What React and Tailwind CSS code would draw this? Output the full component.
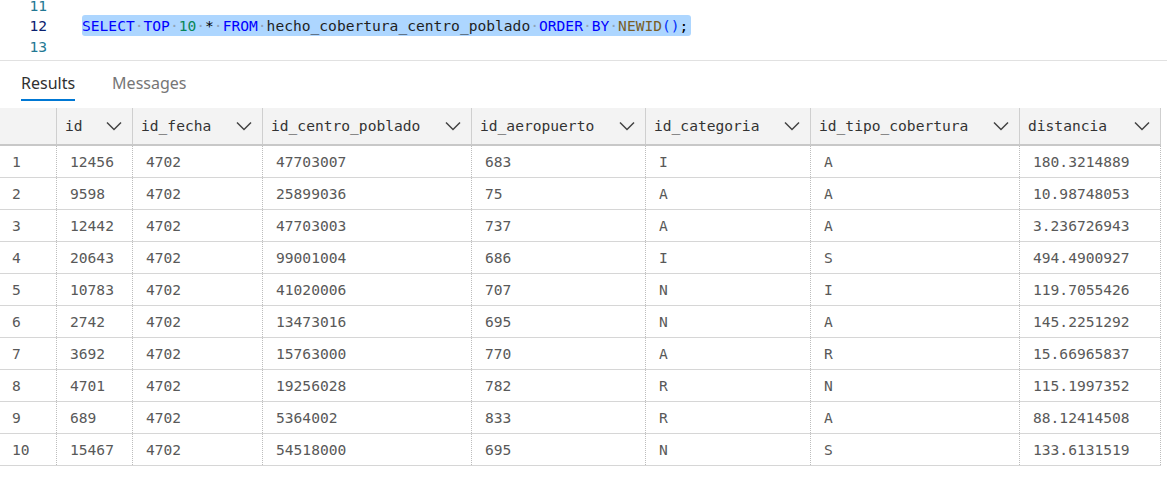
import React from "react";

const mono = { fontFamily: '"DejaVu Sans Mono", "Liberation Mono", monospace' };

const columns = [
  { key: "id", w: "w-[76px]" },
  { key: "id_fecha", w: "w-[130px]" },
  { key: "id_centro_poblado", w: "w-[209px]" },
  { key: "id_aeropuerto", w: "w-[174px]" },
  { key: "id_categoria", w: "w-[165px]" },
  { key: "id_tipo_cobertura", w: "w-[209px]" },
  { key: "distancia", w: "w-[141px]" },
];

const rows = [
  ["12456", "4702", "47703007", "683", "I", "A", "180.3214889"],
  ["9598", "4702", "25899036", "75", "A", "A", "10.98748053"],
  ["12442", "4702", "47703003", "737", "A", "A", "3.236726943"],
  ["20643", "4702", "99001004", "686", "I", "S", "494.4900927"],
  ["10783", "4702", "41020006", "707", "N", "I", "119.7055426"],
  ["2742", "4702", "13473016", "695", "N", "A", "145.2251292"],
  ["3692", "4702", "15763000", "770", "A", "R", "15.66965837"],
  ["4701", "4702", "19256028", "782", "R", "N", "115.1997352"],
  ["689", "4702", "5364002", "833", "R", "A", "88.12414508"],
  ["15467", "4702", "54518000", "695", "N", "S", "133.6131519"],
];

function Chevron() {
  return (
    <svg width="16" height="10" viewBox="0 0 16 10" fill="none">
      <polyline points="1,1.5 8,8.5 15,1.5" stroke="#424242" strokeWidth="1.5" />
    </svg>
  );
}

function Dot() {
  return <span className="text-[#8fa3b8]">·</span>;
}

function Editor() {
  return (
    <div className="h-[61px] overflow-hidden border-b border-[#e1e1e1]" style={mono}>
      <div className="mt-[-4px] flex flex-col text-[14.6px]">
        <div className="flex h-[19px] items-end">
          <span className="w-[47px] text-right leading-[19px] text-[#237893]">11</span>
        </div>
        <div className="flex h-[21px] items-center">
          <span className="w-[47px] text-right text-[#0b216f]">12</span>
          <span className="ml-[35px] flex h-[21px] items-center whitespace-pre rounded-[3px] bg-[#add6ff] pr-[3px]">
            <span className="text-[#0000ff]">SELECT</span><Dot />
            <span className="text-[#0000ff]">TOP</span><Dot />
            <span className="text-[#098658]">10</span><Dot />
            <span className="text-[#000000]">*</span><Dot />
            <span className="text-[#0000ff]">FROM</span><Dot />
            <span className="text-[#1f1f1f]">hecho_cobertura_centro_poblado</span><Dot />
            <span className="text-[#0000ff]">ORDER</span><Dot />
            <span className="text-[#0000ff]">BY</span><Dot />
            <span className="text-[#795e26]">NEWID</span>
            <span className="text-[#0431fa]">()</span>
            <span className="text-[#000000]">;</span>
          </span>
        </div>
        <div className="flex h-[21px] items-center">
          <span className="w-[47px] text-right text-[#237893]">13</span>
        </div>
      </div>
    </div>
  );
}

function Tabs() {
  return (
    <div
      className="flex h-[40px] items-stretch gap-[37px] pl-[21px] text-[16px]"
      style={{ fontFamily: '"Segoe UI", "Noto Sans", sans-serif' }}
    >
      <div className="flex items-center border-b-2 border-[#0078d4] pt-[5px] text-[#303030]">
        Results
      </div>
      <div className="flex items-center pt-[3px] text-[#767676]">Messages</div>
    </div>
  );
}

function Table() {
  return (
    <div className="mt-[7px] w-[1161px] text-[14.6px]" style={mono}>
      {/* header */}
      <div className="flex h-[38px] border-b-2 border-[#c8c8c8] bg-[#f3f3f3] text-[#333333]">
        <div className="w-[57px] shrink-0 border-r border-[#cfcfcf]"></div>
        {columns.map((c) => (
          <div
            key={c.key}
            className={`${c.w} flex shrink-0 items-center justify-between border-r border-[#cfcfcf] pl-[8px] pr-[10px]`}
          >
            <span>{c.key}</span>
            <Chevron />
          </div>
        ))}
      </div>

      {/* body */}
      {rows.map((r, i) => (
        <div key={i} className="flex h-[32px] border-b border-[#d6d6d6] text-[#595959]">
          <div className="flex w-[57px] shrink-0 items-center border-r border-dotted border-[#bdbdbd] pl-[12px]">
            {i + 1}
          </div>
          {r.map((v, j) => (
            <div
              key={j}
              className={`${columns[j].w} flex shrink-0 items-center border-r border-dotted border-[#bdbdbd] pl-[13px]`}
            >
              {v}
            </div>
          ))}
        </div>
      ))}
    </div>
  );
}

export default function App() {
  return (
    <div className="h-[478px] w-[1167px] overflow-hidden bg-white">
      <Editor />
      <Tabs />
      <Table />
    </div>
  );
}
